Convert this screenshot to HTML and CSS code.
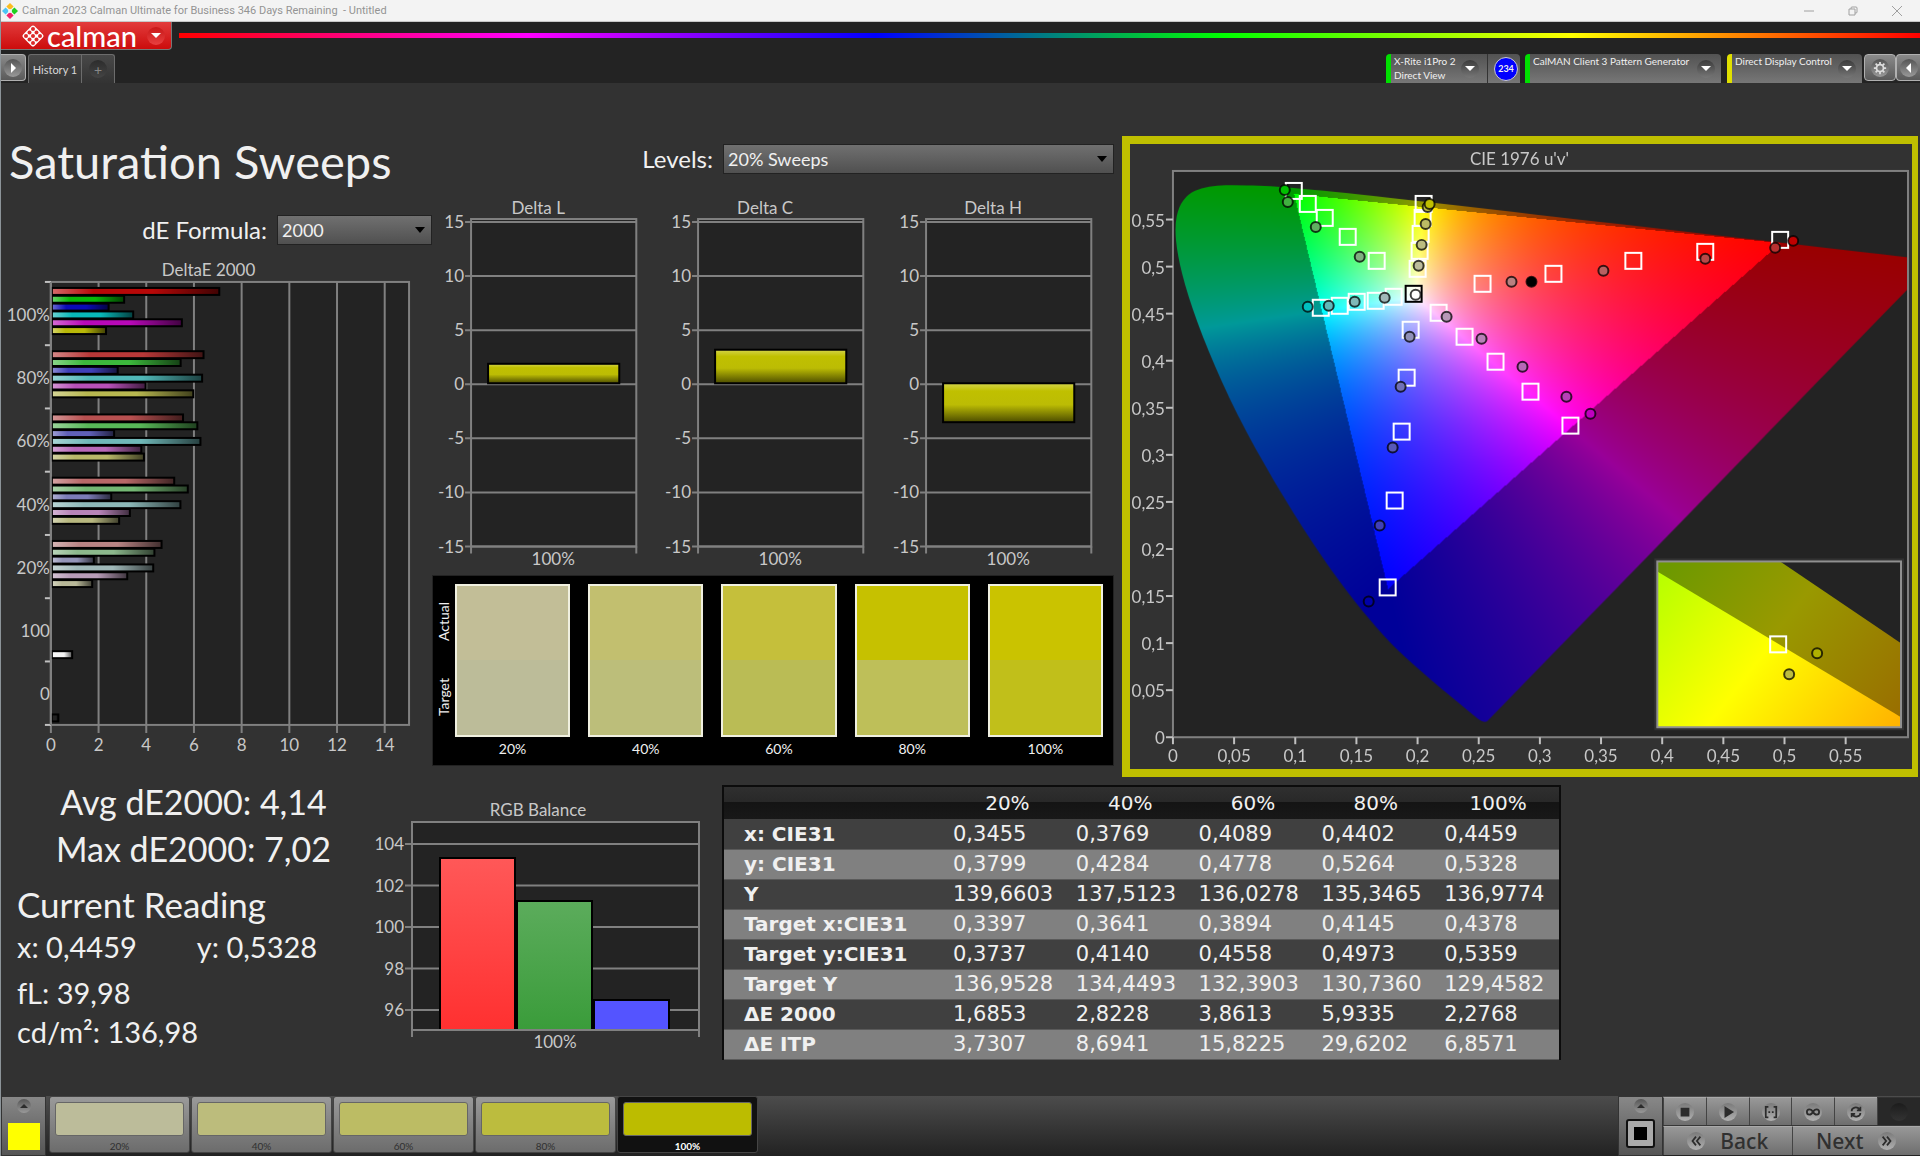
FILE: index.html
```html
<!DOCTYPE html>
<html lang="en">
  <head>
    <meta charset="UTF-8" />
    <meta name="viewport" content="width=device-width, initial-scale=1.0" />
    <title>Calman 2023 Calman Ultimate for Business</title>
    <link rel="stylesheet" href="styles.css">
  </head>
  <body>
    <header class="titlebar">
      <svg class="app-icon" viewBox="0 0 16 16">
        <path d="M8 0l3.6 3.6L8 7.2 4.400 3.600z" fill="#fbbc1f" />
        <path d="M12.400 4.400L16 8l-3.600 3.600L8.800 8z" fill="#1fd01f" />
        <path d="M8 8.800l3.600 3.600L8 16l-3.600-3.600z" fill="#f0206a" />
        <path d="M3.600 4.400L7.200 8l-3.600 3.600L0 8z" fill="#4cc4f5" />
        <circle cx="8" cy="8" r="2" fill="#f3f3f3" />
      </svg>
      <span class="title">Calman 2023 Calman Ultimate for Business 346 Days Remaining &nbsp;- Untitled</span>
      <div class="window-buttons">
        <button aria-label="Minimize"><svg viewBox="0 0 12 12"><path d="M1 6h10" /></svg></button>
        <button aria-label="Restore"><svg viewBox="0 0 12 12"><path d="M2 4h6v6H2zM4 4V3q0-1 1-1h4q1 0 1 1v4q0 1-1 1H8" /></svg></button>
        <button aria-label="Close"><svg viewBox="0 0 12 12"><path d="M1 1l10 10M11 1L1 11" /></svg></button>
      </div>
    </header>

    <div class="brandbar">
      <button class="brand">
        <svg class="logo" viewBox="0 0 24 24">
          <rect x="4" y="4" width="16" height="16" rx="2" transform="rotate(45 12 12)" fill="#fff" />
          <g fill="#dc2a2a">
            <circle cx="12" cy="5" r="2" /><circle cx="8.500" cy="8.500" r="2" /><circle cx="15.500" cy="8.500" r="2" />
            <circle cx="5" cy="12" r="2" /><circle cx="12" cy="12" r="2" /><circle cx="19" cy="12" r="2" />
            <circle cx="8.500" cy="15.500" r="2" /><circle cx="15.500" cy="15.500" r="2" /><circle cx="12" cy="19" r="2" />
          </g>
        </svg>
        <span class="wordmark">calman</span>
        <span class="round red"><i class="down"></i></span>
      </button>
      <div class="spectrum"></div>
    </div>

    <nav class="tabs">
      <button class="square-btn" aria-label="Expand"><span class="round"><i class="right"></i></span></button>
      <button class="tab">History 1</button>
      <button class="tab add" aria-label="Add tab"><span class="round dim">+</span></button>
      <div class="spacer"></div>
      <div class="device green meter">
        <button class="device-main"><span class="device-name">X-Rite i1Pro 2<br />Direct View</span><span class="round dark"><i class="down"></i></span></button>
        <span class="count">234</span>
      </div>
      <div class="device green pattern">
        <button class="device-main"><span class="device-name">CalMAN Client 3 Pattern Generator</span><span class="round dark"><i class="down"></i></span></button>
      </div>
      <div class="device yellow display">
        <button class="device-main"><span class="device-name">Direct Display Control</span><span class="round dark"><i class="down"></i></span></button>
      </div>
      <button class="square-btn gear" aria-label="Settings">
        <span class="round"><svg viewBox="0 0 16 16"><circle cx="8" cy="8" r="4" fill="none" stroke="#ddd" stroke-width="2" /><path d="M8 1v3M8 12v3M1 8h3M12 8h3M3 3l2 2M11 11l2 2M13 3l-2 2M5 11l-2 2" stroke="#ddd" stroke-width="2" /></svg></span>
      </button>
      <button class="square-btn last" aria-label="Collapse"><span class="round"><i class="left"></i></span></button>
    </nav>

    <main>
      <section class="top">
        <div class="col-de">
          <h1>Saturation Sweeps</h1>
          <div class="field">
            <label for="formula">dE Formula:</label>
            <select id="formula" class="formula"><option>2000</option></select>
          </div>
          <svg id="deltae" class="chart" viewBox="0 0 432 510"></svg>
        </div>

        <div class="col-delta">
          <div class="field">
            <label for="levels">Levels:</label>
            <select id="levels" class="levels"><option>20% Sweeps</option></select>
          </div>
          <div class="deltas">
            <svg id="deltaL" class="chart" viewBox="0 0 227 370"></svg>
            <svg id="deltaC" class="chart" viewBox="0 0 227 370"></svg>
            <svg id="deltaH" class="chart" viewBox="0 0 227 370"></svg>
          </div>
          <div class="swatches">
            <div class="side"><span>Actual</span><span>Target</span></div>
            <div class="swatch-list">
              <div class="swatch s20"><div class="colors"><b></b><i></i></div>20%</div>
              <div class="swatch s40"><div class="colors"><b></b><i></i></div>40%</div>
              <div class="swatch s60"><div class="colors"><b></b><i></i></div>60%</div>
              <div class="swatch s80"><div class="colors"><b></b><i></i></div>80%</div>
              <div class="swatch s100"><div class="colors"><b></b><i></i></div>100%</div>
            </div>
          </div>
        </div>

        <div class="cie">
          <canvas id="cieFill" width="783" height="626"></canvas>
          <svg id="ciePlot" viewBox="0 0 783 626"></svg>
        </div>
      </section>

      <section class="bottom">
        <div class="readings">
          <div class="summary">
            <p>Avg dE2000: 4,14</p>
            <p>Max dE2000: 7,02</p>
          </div>
          <h2>Current Reading</h2>
          <p class="xy"><span>x: 0,4459</span><span>y: 0,5328</span></p>
          <p class="fl">fL: 39,98</p>
          <p>cd/m²: 136,98</p>
        </div>
        <div class="rgb">
          <svg id="rgb" class="chart" viewBox="0 0 340 260"></svg>
        </div>
        <table>
          <thead>
            <tr><th></th><th>20%</th><th>40%</th><th>60%</th><th>80%</th><th>100%</th></tr>
          </thead>
          <tbody>
            <tr><th>x: CIE31</th><td>0,3455</td><td>0,3769</td><td>0,4089</td><td>0,4402</td><td>0,4459</td></tr>
            <tr><th>y: CIE31</th><td>0,3799</td><td>0,4284</td><td>0,4778</td><td>0,5264</td><td>0,5328</td></tr>
            <tr><th>Y</th><td>139,6603</td><td>137,5123</td><td>136,0278</td><td>135,3465</td><td>136,9774</td></tr>
            <tr><th>Target x:CIE31</th><td>0,3397</td><td>0,3641</td><td>0,3894</td><td>0,4145</td><td>0,4378</td></tr>
            <tr><th>Target y:CIE31</th><td>0,3737</td><td>0,4140</td><td>0,4558</td><td>0,4973</td><td>0,5359</td></tr>
            <tr><th>Target Y</th><td>136,9528</td><td>134,4493</td><td>132,3903</td><td>130,7360</td><td>129,4582</td></tr>
            <tr><th>ΔE 2000</th><td>1,6853</td><td>2,8228</td><td>3,8613</td><td>5,9335</td><td>2,2768</td></tr>
            <tr><th>ΔE ITP</th><td>3,7307</td><td>8,6941</td><td>15,8225</td><td>29,6202</td><td>6,8571</td></tr>
          </tbody>
        </table>
      </section>
    </main>

    <footer>
      <button class="current" aria-label="Current colour"><span class="round small"><i class="up"></i></span><span class="patch"></span></button>
      <button class="level l20"><span></span>20%</button>
      <button class="level l40"><span></span>40%</button>
      <button class="level l60"><span></span>60%</button>
      <button class="level l80"><span></span>80%</button>
      <button class="level l100 active"><span></span>100%</button>
      <div class="spacer"></div>
      <button class="window-size" aria-label="Pattern window"><span class="round small"><i class="up"></i></span><span class="frame"></span></button>
      <div class="controls">
        <div class="transport">
          <button aria-label="Stop"><span class="round light"><svg viewBox="0 0 16 16"><path d="M4 4h8v8H4z" fill="#2c2c2c" /></svg></span></button>
          <button aria-label="Play"><span class="round light"><svg viewBox="0 0 16 16"><path d="M5 3l8 5-8 5z" fill="#2c2c2c" /></svg></span></button>
          <button aria-label="Read series"><span class="round light"><svg viewBox="0 0 16 16"><path d="M5 2H2v12h3M11 2h3v12h-3M5 8h2M9 8h2" /></svg></span></button>
          <button aria-label="Continuous"><span class="round light"><svg viewBox="0 0 16 16"><path d="M8 8C6 4 1 4 1 8s5 4 7 0 7-4 7 0-5 4-7 0z" /></svg></span></button>
          <button aria-label="Refresh"><span class="round light"><svg viewBox="0 0 16 16"><path d="M3 7c0-4 6-6 9-2M13 9c0 4-6 6-9 2M13 2v4H9M3 14v-4h4" /></svg></span></button>
          <button class="off" aria-label="Record"><span class="round black"></span></button>
        </div>
        <div class="paging">
          <button><span class="round light"><svg viewBox="0 0 16 16"><path d="M8 3L4 8l4 5M13 3L9 8l4 5" /></svg></span>Back</button>
          <button>Next<span class="round light"><svg viewBox="0 0 16 16"><path d="M3 3l4 5-4 5M8 3l4 5-4 5" /></svg></span></button>
        </div>
      </div>
    </footer>
    <script src="script.js"></script>
  </body>
</html>
```
FILE: styles.css
```css
* {
  box-sizing: border-box;
}
body {
  margin: 0;
  min-height: 100vh;
  display: flex;
  flex-direction: column;
  background-color: #323232;
  color: #f0f0f0;
  font-family: Lato, "Open Sans", sans-serif;
  border-left: 1px solid #8c9499;
}
button {
  margin: 0;
  padding: 0;
  border: none;
  background: none;
  color: inherit;
  font-family: inherit;
  cursor: pointer;
}
h1, h2, p {
  margin: 0;
  font-weight: normal;
}
.spacer {
  flex: 1;
}

/* title bar */
.titlebar {
  height: 22px;
  display: flex;
  align-items: center;
  background-color: #f3f3f3;
  border-bottom: 1px solid #c8c8c8;
  color: #949494;
  font: 11px Roboto, sans-serif;
}
.app-icon {
  width: 16px;
  height: 16px;
  margin: 0 4px 0 1px;
}
.title {
  flex: 1;
}
.window-buttons {
  display: flex;
  gap: 32px;
  padding-right: 17px;
}
.window-buttons svg {
  display: block;
  width: 12px;
  height: 12px;
  fill: none;
  stroke: #a0a0a0;
}

/* brand bar */
.brandbar {
  height: 32px;
  display: flex;
  align-items: flex-start;
  background-color: #232323;
}
.brand {
  width: 171px;
  height: 28px;
  display: flex;
  align-items: center;
  padding: 0 6px 0 20px;
  background: linear-gradient(#e23c3c, #cc0c0c);
  border-bottom: 1px solid #777;
  border-right: 1px solid #777;
  border-radius: 0 0 4px 0;
  color: #fff;
}
.logo {
  width: 24px;
  height: 24px;
}
.wordmark {
  flex: 1;
  padding-left: 2px;
  font-size: 29px;
  font-weight: 500;
  line-height: 24px;
  text-align: left;
}
.spectrum {
  flex: 1;
  height: 5px;
  margin: 11px 0 0 7px;
  background: linear-gradient(to right, #f00, #f0f, #00f, #0f0, #ff0, #f00);
}

/* round button faces and arrows */
.round {
  width: 18px;
  height: 18px;
  display: flex;
  flex: none;
  align-items: center;
  justify-content: center;
  border-radius: 50%;
  background: linear-gradient(#555, #999);
}
.round.red {
  background: linear-gradient(#c81818, #e84040);
}
.round.dim {
  background: linear-gradient(#2c2c2c, #444);
  color: #888;
  font-size: 14px;
}
.round.dark {
  background: linear-gradient(#3c3c3c, #777);
}
.round.light {
  background: linear-gradient(#7a7a7a, #b0b0b0);
}
.round.black {
  background: linear-gradient(#1c1c1c, #333);
}
.round.small {
  width: 14px;
  height: 14px;
}
.round svg {
  width: 14px;
  height: 14px;
  fill: none;
  stroke: #2c2c2c;
  stroke-width: 2;
}
.round i {
  border: 5px solid transparent;
}
.round i.down {
  border-top-color: #fff;
  border-bottom-width: 0;
}
.round i.up {
  border-width: 4px;
  border-bottom-color: #2c2c2c;
  border-top-width: 0;
}
.round i.right {
  border-left-color: #fff;
  border-right-width: 0;
}
.round i.left {
  border-right-color: #fff;
  border-left-width: 0;
}

/* tabs */
.tabs {
  height: 29px;
  display: flex;
  background-color: #232323;
}
.square-btn {
  width: 25px;
  height: 27px;
  display: flex;
  align-items: center;
  justify-content: center;
  background: linear-gradient(#8a8a8a, #5a5a5a);
  border: 1px solid #b0b0b0;
  border-left: none;
  border-radius: 0 4px 4px 0;
}
.square-btn.gear {
  width: 32px;
  margin-left: 2px;
  border-left: 1px solid #b0b0b0;
  border-radius: 4px;
}
.square-btn.last {
  width: 24px;
  border-left: 1px solid #b0b0b0;
  border-right: none;
  border-radius: 4px 0 0 4px;
}
.tab {
  width: 54px;
  margin-left: 2px;
  background: linear-gradient(#484848, #333);
  border: 1px solid #6c6c6c;
  border-bottom: none;
  border-radius: 3px 0 0 0;
  color: #d8d8d8;
  font-size: 11px;
}
.tab.add {
  width: 33px;
  display: flex;
  align-items: center;
  justify-content: center;
  margin-left: 0;
  border-left: none;
  border-radius: 0 3px 0 0;
}
.device {
  height: 29px;
  display: flex;
  align-items: center;
  margin-right: 6px;
  border-left: 5px solid #00e000;
  border-radius: 4px 4px 0 0;
  background: linear-gradient(#525252, #777);
}
.device.yellow {
  border-left-color: #e0e000;
}
.meter {
  width: 134px;
  margin-right: 5px;
}
.pattern {
  width: 196px;
}
.display {
  width: 135px;
  margin-right: 0;
}
.device-main {
  flex: 1;
  align-self: stretch;
  display: flex;
  align-items: center;
  padding: 0 6px 0 3px;
  font-size: 10px;
  line-height: 14px;
  text-align: left;
  white-space: nowrap;
}
.device-name {
  flex: 1;
  align-self: flex-start;
}
.meter .device-main {
  padding-right: 8px;
  border-right: 1px solid #333;
}
.pattern .round,
.display .round {
  margin-right: 0;
}
.count {
  width: 24px;
  height: 24px;
  margin: 0 2px 0 6px;
  border: 1px solid #ccc;
  border-radius: 50%;
  background-color: #00f;
  font-size: 9px;
  font-weight: bold;
  line-height: 22px;
  text-align: center;
}

/* charts */
main {
  flex: 1;
  padding: 53px 2px 0 0;
}
.top {
  display: grid;
  grid-template-columns: 431fr 690fr 796fr;
}
.chart {
  display: block;
  width: 100%;
}
svg text {
  fill: #c8c8c8;
  font-size: 17px;
}
h1 {
  padding-left: 8px;
  font-size: 47px;
  line-height: 50px;
}
.field {
  display: flex;
  align-items: center;
  justify-content: flex-end;
  gap: 10px;
  font-size: 24px;
  line-height: 30px;
}
select {
  height: 30px;
  padding: 0 4px;
  appearance: none;
  border: 1px solid #222;
  border-radius: 0;
  background: url("data:image/svg+xml,%3Csvg xmlns='http://www.w3.org/2000/svg' width='10' height='6'%3E%3Cpath d='M0 0h10L5 6z'/%3E%3C/svg%3E") no-repeat right 6px center, linear-gradient(#707070, #505050);
  color: #f0f0f0;
  font: 18px Lato, sans-serif;
}
.formula {
  width: 155px;
}
.levels {
  width: 391px;
}
.col-de .field {
  margin: 29px 0 13px;
}
.col-delta {
  padding-right: 8px;
}
.col-delta .field {
  margin-top: 8px;
}
.deltas {
  display: grid;
  grid-template-columns: repeat(3, 1fr);
  margin: 24px 0 6px;
}
.swatches {
  display: flex;
  padding: 8px 10px 4px 2px;
  background-color: #000;
  border: 1px solid #222;
}
.side {
  display: flex;
  flex-direction: column;
  justify-content: space-around;
  width: 20px;
  padding-bottom: 26px;
  font-size: 14px;
}
.side span {
  writing-mode: vertical-rl;
  transform: rotate(180deg);
}
.swatch-list {
  flex: 1;
  display: grid;
  grid-template-columns: repeat(5, 1fr);
  gap: 18px;
}
.swatch {
  font-size: 14px;
  line-height: 24px;
  text-align: center;
}
.swatch .colors {
  height: 153px;
  display: grid;
  grid-template-rows: 1fr 1fr;
  border: 2px solid #f0f0e0;
}
.s20 b { background-color: #c2be97; }
.s20 i { background-color: #bcbc99; }
.s40 b { background-color: #c2bf6f; }
.s40 i { background-color: #bcbe7a; }
.s60 b { background-color: #c5bf3b; }
.s60 i { background-color: #babc55; }
.s80 b { background-color: #c6c100; }
.s80 i { background-color: #bebf59; }
.s100 b { background-color: #cac300; }
.s100 i { background-color: #c1bf1a; }

.cie {
  display: grid;
  border: 8px solid #bfbf00;
  border-right-width: 6px;
}
.cie canvas,
.cie svg {
  grid-area: 1 / 1;
  display: block;
  width: 100%;
}

/* readings and table */
.bottom {
  display: flex;
  align-items: flex-start;
}
.readings {
  width: 369px;
  padding: 1px 0 0 16px;
  font-size: 29px;
  line-height: 39px;
}
.summary {
  margin-bottom: 9px;
  font-size: 34px;
  line-height: 47px;
  text-align: center;
}
h2 {
  font-size: 35px;
  line-height: 46px;
}
.xy {
  display: flex;
  gap: 60px;
}
.fl {
  padding-top: 7px;
}
.rgb {
  width: 340px;
  padding-top: 21px;
}
table {
  width: 839px;
  margin: 8px 0 0 12px;
  table-layout: fixed;
  border: 2px solid #0c0c0c;
  border-bottom: none;
  border-collapse: collapse;
  font-family: "DejaVu Sans", sans-serif;
  font-size: 21px;
}
thead tr {
  height: 33px;
  background: linear-gradient(#303030, #282828 50%, #141414 50%, #181818);
}
thead th {
  padding: 0;
  font-size: 20px;
  font-weight: normal;
}
thead th:first-child {
  width: 223px;
}
tbody tr {
  height: 30px;
  background-color: #404040;
  border-bottom: 1px solid #5a5a5a;
}
tbody tr:nth-child(even) {
  background-color: #808080;
}
tbody th {
  padding: 0 0 0 20px;
  font-size: 20px;
  text-align: left;
  white-space: nowrap;
}
td {
  padding: 0 0 0 7px;
}

/* bottom bar */
footer {
  height: 60px;
  display: flex;
  background: linear-gradient(#4c4c4c, #222);
}
.current,
.window-size {
  width: 45px;
  display: flex;
  flex-direction: column;
  align-items: center;
  gap: 10px;
  padding-top: 2px;
  background: linear-gradient(#888, #555);
  border: 1px solid #333;
}
.patch {
  width: 32px;
  height: 27px;
  background-color: #ff0;
}
.current {
  margin-right: 3px;
}
.level {
  width: 141px;
  height: 57px;
  margin-right: 1px;
  padding: 4px 5px 0;
  background: linear-gradient(#9a9a9a, #6c6c6c);
  border: 1px solid #444;
  border-radius: 3px;
  color: #303030;
  font-size: 10px;
}
.level span {
  display: block;
  height: 34px;
  margin-bottom: 4px;
  border: 1px solid #666;
  border-radius: 3px;
}
.l20 span { background-color: #bcbc9a; }
.l40 span { background-color: #bcbc7c; }
.l60 span { background-color: #bcbc64; }
.l80 span { background-color: #bcbc3e; }
.l100 span { background-color: #bcbc00; }
.level.active {
  background: #111;
  color: #fff;
  font-weight: bold;
}
.window-size {
  gap: 6px;
}
.frame {
  width: 29px;
  height: 29px;
  border: 2px solid #111;
  border-radius: 3px;
  background: linear-gradient(#000, #000) center / 13px 13px no-repeat, #aaa;
}
.controls {
  width: 257px;
  padding-top: 1px;
}
.transport {
  display: flex;
}
.transport button,
.paging button {
  flex: 1;
  height: 28px;
  display: flex;
  align-items: center;
  justify-content: center;
  background: linear-gradient(#989898, #6e6e6e);
  border-left: 1px solid #444;
  border-top: 1px solid #aaa;
}
.transport .off {
  background: #282828;
  border-top-color: #333;
}
.paging {
  display: flex;
  margin-top: 1px;
}
.paging button {
  height: 29px;
  gap: 15px;
  color: #303030;
  font: 500 21px "Noto Sans", sans-serif;
}
```
FILE: script.js
```js
var GRID = "#808080";

function rect(x, y, w, h, fill, extra) {
  return `<rect x="${x}" y="${y}" width="${w}" height="${h}" fill="${fill}" ${extra || ""}/>`;
}
function line(x1, y1, x2, y2, color) {
  return `<path d="M${x1} ${y1}L${x2} ${y2}" stroke="${color || GRID}" stroke-width="2"/>`;
}
function text(x, y, value, anchor) {
  return `<text x="${x}" y="${y}" text-anchor="${anchor || "middle"}">${value}</text>`;
}

/* DeltaE 2000 bars, one group per saturation level */
function drawDeltaE() {
  var groups = [
    { label: "100%", bars: [7.02, 3.03, 2.38, 3.41, 5.45, 2.27], colors: ["#b80808", "#08b808", "#0a0ab8", "#08b8b8", "#b808b8", "#b8b808"] },
    { label: "80%", bars: [6.36, 5.4, 2.76, 6.3, 3.93, 5.93], colors: ["#b83838", "#3cb83c", "#4040b8", "#50b8b8", "#b850b8", "#b8b850"] },
    { label: "60%", bars: [5.5, 6.1, 2.61, 6.23, 3.75, 3.86], colors: ["#b85050", "#58b858", "#6060b8", "#70b8b8", "#b868b8", "#b8b868"] },
    { label: "40%", bars: [5.13, 5.7, 2.49, 5.39, 3.27, 2.82], colors: ["#b86868", "#74b874", "#7c7cb8", "#8cb8b8", "#b884b8", "#b8b880"] },
    { label: "20%", bars: [4.6, 4.3, 1.76, 4.25, 3.16, 1.69], colors: ["#b88484", "#8cb88c", "#9494b8", "#a0b8b8", "#b89cb8", "#b8b898"] },
    { label: "100", bars: [0, 0, 0, 0, 0, 0, 0.85], colors: ["", "", "", "", "", "", "#f4f4f4"] },
    { label: "0", bars: [0, 0, 0, 0, 0, 0, 0.27], colors: ["", "", "", "", "", "", "#222222"] },
  ];
  var left = 50, top = 24, unit = 23.9, step = 63.4;
  var out = `<defs><linearGradient id="barShade">
    <stop offset="0" stop-color="#fff" stop-opacity=".4"/>
    <stop offset=".25" stop-color="#fff" stop-opacity="0"/>
    <stop offset=".6" stop-color="#000" stop-opacity="0"/>
    <stop offset="1" stop-color="#000" stop-opacity=".65"/>
  </linearGradient></defs>`;
  out += text(208, 18, "DeltaE 2000");
  out += rect(left, top, 359, 444, "#232323", `stroke="${GRID}" stroke-width="2"`);
  for (var v = 0; v <= 14; v += 2) {
    var x = left + v * unit;
    out += line(x, top, x, top + 452);
    out += text(x, top + 470, v);
  }
  groups.forEach((group, g) => {
    var y = top + g * step;
    out += line(left - 6, y, left, y, "#c0c0c0");
    out += text(left - 1, y + 39, group.label, "end");
    group.bars.forEach((value, i) => {
      if (!value) return;
      var by = y + 6 + i * 7.85;
      out += rect(left + 1, by, value * unit, 7, group.colors[i]);
      out += rect(left + 1, by, value * unit, 7, "url(#barShade)", 'stroke="#000" stroke-width="2"');
    });
  });
  out += line(left - 6, top + 444, left, top + 444, "#c0c0c0");
  out += line(left, top, left, top + 444);
  document.getElementById("deltae").innerHTML = out;
}

function drawDelta(id, title, value) {
  var zero = 186, unit = 10.8;
  var grad = id + "Fill";
  var out = `<defs><linearGradient id="${grad}" x2="0" y2="1">
    <stop offset="0" stop-color="#d4d44c"/><stop offset=".2" stop-color="#c0c000"/>
    <stop offset=".55" stop-color="#bcbc04"/><stop offset="1" stop-color="#4c4c00"/>
  </linearGradient></defs>`;
  out += text(106, 16, title);
  out += rect(39, 21, 165, 327, "#232323", `stroke="${GRID}" stroke-width="2"`);
  for (var v = 15; v >= -15; v -= 5) {
    var y = zero - v * unit;
    out += line(33, y, 204, y);
    out += text(32, y + 6, v, "end");
  }
  out += line(39, 348, 39, 355) + line(204, 348, 204, 355);
  out += text(121, 366, "100%");
  var h = Math.abs(value) * unit;
  out += rect(56, value > 0 ? zero - h - 1 : zero - 1, 131, h, `url(#${grad})`, 'stroke="#000" stroke-width="2"');
  document.getElementById(id).innerHTML = out;
}

function drawRgb() {
  var out = `<defs>
    <linearGradient id="red" x2="0" y2="1"><stop stop-color="#ff5858"/><stop offset="1" stop-color="#ff3030"/></linearGradient>
    <linearGradient id="green" x2="0" y2="1"><stop stop-color="#5cac5c"/><stop offset="1" stop-color="#3a9c3a"/></linearGradient>
  </defs>`;
  out += text(168, 18, "RGB Balance");
  out += rect(42, 24, 287, 208, "#232323", `stroke="${GRID}" stroke-width="2"`);
  for (var v = 104; v >= 96; v -= 2) {
    var y = 46 + (104 - v) * 20.75;
    out += line(35, y, 329, y);
    out += text(34, y + 6, v, "end");
  }
  out += rect(70, 60, 75, 172, "url(#red)", 'stroke="#000" stroke-width="2"');
  out += rect(147, 103, 75, 129, "url(#green)", 'stroke="#000" stroke-width="2"');
  out += rect(224, 202, 75, 30, "#5454ff", 'stroke="#000" stroke-width="2"');
  out += line(42, 232, 329, 232) + line(42, 232, 42, 239) + line(329, 232, 329, 239);
  out += text(185, 250, "100%");
  document.getElementById("rgb").innerHTML = out;
}

/* CIE 1976 diagram: plot origin and pixels per unit */
var U0 = 43, V0 = 594, UPX = 1224.7, VPX = 942.5;

var locus = [
  [0.1741, 0.005], [0.1733, 0.0048], [0.1714, 0.0051], [0.1689, 0.0069], [0.1644, 0.0109], [0.1566, 0.0177],
  [0.144, 0.0297], [0.1355, 0.0399], [0.1241, 0.0578], [0.1096, 0.0868], [0.0913, 0.1327], [0.0687, 0.2007],
  [0.0454, 0.295], [0.0235, 0.4127], [0.0082, 0.5384], [0.0039, 0.6548], [0.0139, 0.7502], [0.0389, 0.812],
  [0.0743, 0.8338], [0.1142, 0.8262], [0.1547, 0.8059], [0.2296, 0.7543], [0.3016, 0.6923], [0.3731, 0.6245],
  [0.4441, 0.5547], [0.5125, 0.4866], [0.5752, 0.4242], [0.627, 0.3725], [0.6658, 0.334], [0.6915, 0.3083],
  [0.719, 0.2809], [0.7347, 0.2653],
];

function toPixel(p) {
  var d = -2 * p[0] + 12 * p[1] + 3;
  return [U0 + (4 * p[0] / d) * UPX, V0 - (9 * p[1] / d) * VPX];
}

function drawCieFill() {
  var canvas = document.getElementById("cieFill");
  var w = canvas.width, h = canvas.height;
  var ctx = canvas.getContext("2d");
  var buffer = document.createElement("canvas");
  buffer.width = w;
  buffer.height = h;
  var bctx = buffer.getContext("2d");
  var img = bctx.createImageData(w, h);
  for (var py = 0; py < h; py++) {
    for (var px = 0; px < w; px++) {
      var u = (px - U0) / UPX, v = Math.max((V0 - py) / VPX, 0.005);
      var X = 9 * u / (4 * v), Z = (12 - 3 * u - 20 * v) / (4 * v);
      // XYZ to linear P3
      var r = 2.4935 * X - 0.9314 - 0.4027 * Z;
      var g = -0.8295 * X + 1.7627 + 0.0236 * Z;
      var b = 0.0358 * X - 0.0762 + 0.9569 * Z;
      var shade = r < 0 || g < 0 || b < 0 ? 153 : 255;
      r = Math.max(r, 0);
      g = Math.max(g, 0);
      b = Math.max(b, 0);
      var m = Math.max(r, g, b);
      var i = (py * w + px) * 4;
      img.data[i] = r / m * shade;
      img.data[i + 1] = g / m * shade;
      img.data[i + 2] = b / m * shade;
      img.data[i + 3] = 255;
    }
  }
  bctx.putImageData(img, 0, 0);

  ctx.fillStyle = "#232323";
  ctx.fillRect(U0, 27, 736, 567);
  ctx.beginPath();
  ctx.rect(U0, 27, 736, 567);
  ctx.clip();
  // smooth the outline through the midpoints of the locus samples
  var pts = locus.map(toPixel);
  ctx.beginPath();
  ctx.moveTo(pts[0][0], pts[0][1]);
  for (var k = 1; k < pts.length - 1; k++) {
    ctx.quadraticCurveTo(pts[k][0], pts[k][1], (pts[k][0] + pts[k + 1][0]) / 2, (pts[k][1] + pts[k + 1][1]) / 2);
  }
  ctx.lineTo(pts[pts.length - 1][0], pts[pts.length - 1][1]);
  ctx.closePath();
  ctx.fillStyle = ctx.createPattern(buffer, "no-repeat");
  ctx.fill();
}

function square(x, y, color) {
  return rect(x - 8, y - 8, 16, 16, "none", `stroke="${color || "#fff"}" stroke-width="2"`);
}
function dot(x, y, fill) {
  return `<circle cx="${x}" cy="${y}" r="5" fill="${fill}" stroke="#000" stroke-opacity=".75" stroke-width="2"/>`;
}

function drawCiePlot() {
  var targets = [
    [164, 47], [178, 60], [195, 74], [218, 93], [247, 117],
    [294, 60], [293, 74], [291, 90], [290, 107], [288, 125],
    [191, 164], [210, 162], [227, 158], [246, 157], [264, 153],
    [309, 169], [335, 193], [366, 218], [401, 248], [441, 282],
    [281, 186], [277, 234], [272, 288], [265, 357], [258, 444],
    [353, 140], [424, 130], [504, 117], [576, 108], [651, 96],
  ];
  var measured = [
    [230, 113, "#80b080"], [186, 83, "#60b060"], [158, 58, "#40b040"], [155, 46, "#00c000"],
    [289, 122, "#bcbc9c"], [292, 101, "#bcbc80"], [296, 80, "#bcbc64"], [298, 63, "#bcbc40"], [300, 60, "#c0c000"],
    [255, 154, "#a0b8b8"], [225, 158, "#80b8b8"], [199, 162, "#60b8b8"], [178, 163, "#00c0c0"],
    [317, 173, "#b898b8"], [352, 195, "#b880b8"], [393, 223, "#b868b8"], [437, 253, "#b840b8"], [461, 270, "#c000c0"],
    [280, 193, "#9090b8"], [271, 243, "#7070b8"], [263, 304, "#5858b8"], [250, 382, "#4040b8"], [239, 458, "#0000a8"],
    [382, 138, "#b88080"], [402, 138, "#000"], [474, 127, "#b86060"], [576, 115, "#b84848"], [646, 104, "#b83030"], [664, 97, "#c00000"],
  ];
  var out = `<defs>
    <linearGradient id="insetIn" gradientUnits="userSpaceOnUse" x1="528" y1="425" x2="752" y2="600">
      <stop stop-color="#b4ff00"/><stop offset=".48" stop-color="#ff0"/><stop offset="1" stop-color="#ffb400"/>
    </linearGradient>
    <linearGradient id="insetOut" gradientUnits="userSpaceOnUse" x1="548" y1="408" x2="772" y2="583">
      <stop stop-color="#6c9900"/><stop offset=".45" stop-color="#990"/><stop offset="1" stop-color="#996c00"/>
    </linearGradient>
  </defs>`;
  out += text(390, 21, "CIE 1976 u'v'");
  out += rect(U0, 27, 736, 567, "none", `stroke="${GRID}" stroke-width="2"`);
  for (var n = 0; n < 12; n++) {
    var label = String(n * 5 / 100).replace(".", ",");
    var x = U0 + n * 0.05 * UPX;
    var y = V0 - n * 0.05 * VPX;
    out += line(x, V0, x, V0 + 7, "#c0c0c0") + text(x, V0 + 25, label);
    out += line(U0 - 7, y, U0, y, "#c0c0c0") + text(U0 - 8, y + 7, label, "end");
  }
  targets.forEach((t) => {
    out += square(t[0], t[1]);
  });
  out += rect(276, 142, 16, 16, "#fff", 'fill-opacity=".6" stroke="#000" stroke-width="2"');
  out += dot(286, 151, "#fff");
  measured.forEach((m) => {
    out += dot(m[0], m[1], m[2]);
  });
  // magnified view around the selected target
  out += rect(525, 415, 250, 172, "#323232");
  out += rect(528, 418, 244, 166, "#232323");
  out += '<path d="M528 418H651L772 500V584H528z" fill="url(#insetOut)"/>';
  out += '<path d="M528 428L772 574V584H528z" fill="url(#insetIn)"/>';
  out += rect(528, 418, 244, 166, "none", 'stroke="#909090" stroke-width="2"');
  out += square(649, 501) + dot(688, 510, "#b0b000") + dot(660, 531, "#bcbc40");
  document.getElementById("ciePlot").innerHTML = out;
}

drawDeltaE();
drawDelta("deltaL", "Delta L", 1.8);
drawDelta("deltaC", "Delta C", 3.1);
drawDelta("deltaH", "Delta H", -3.6);
drawRgb();
drawCieFill();
drawCiePlot();
```
